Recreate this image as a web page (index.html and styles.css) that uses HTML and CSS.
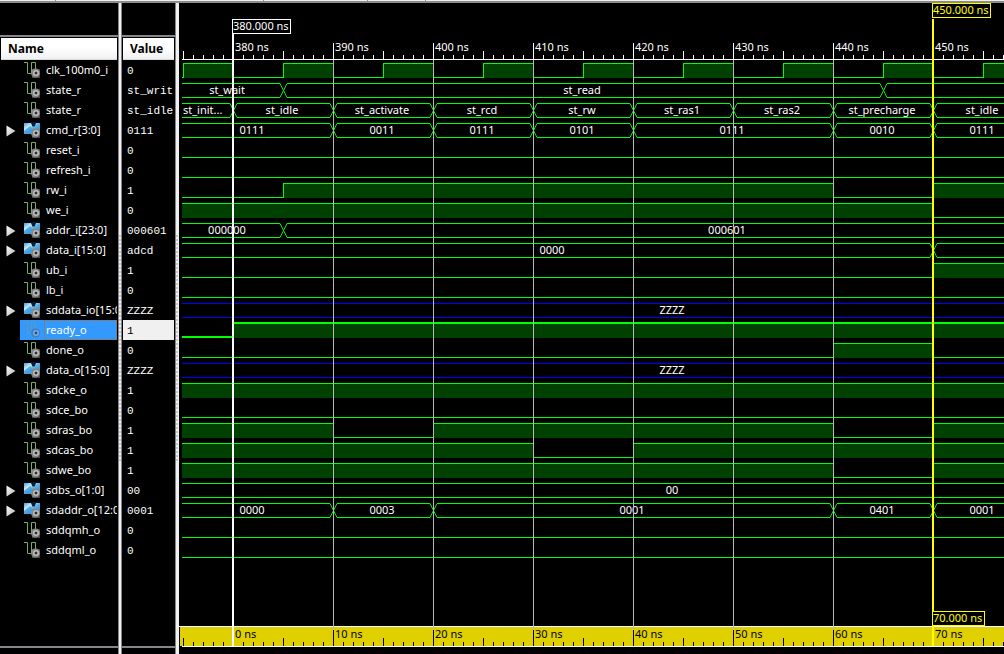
FILE: index.html
```html
<!DOCTYPE html>
<html lang="en">
<head>
<meta charset="utf-8">
<title>Waveform viewer</title>
<link rel="stylesheet" href="styles.css">
</head>
<body>
<svg class="defs" width="0" height="0" aria-hidden="true">
  <defs>
    <linearGradient id="sky" x1="0" y1="0" x2="1" y2="1"><stop offset="0" stop-color="#3a9ade"/><stop offset="0.3" stop-color="#cdeafc"/><stop offset="0.5" stop-color="#5ab2ea"/><stop offset="1" stop-color="#2078c4"/></linearGradient>
    <linearGradient id="tri" x1="0" y1="0" x2="1" y2="1"><stop offset="0" stop-color="#ffffff"/><stop offset="1" stop-color="#b0b0b0"/></linearGradient>
    <symbol id="gear" viewBox="0 0 16 16">
      <rect x="8" y="7" width="8" height="9" fill="#8c8c8c" opacity=".5"/>
      <circle cx="11.5" cy="11" r="4.500" fill="#8a8a8a"/>
      <circle cx="12" cy="11" r="3.500" fill="#c4c4c4" stroke="#606060" stroke-width=".6"/>
      <path d="M10.500 11h3M12 9.500v3" stroke="#000" stroke-width="1"/>
    </symbol>
    <symbol id="wire" viewBox="0 0 16 16">
      <path d="M0 .5H3.500V11.500H7.500V.5H11.500V8" fill="none" stroke="#7cac68"/>
      <use href="#gear"/>
    </symbol>
    <symbol id="wire-sel" viewBox="0 0 16 16">
      <path d="M0 .5H3.500V11.500H7.500V.5H11.500V8" fill="none" stroke="#5c9cae"/>
      <rect x="8" y="7" width="8" height="9" fill="#5a96cc" opacity=".5"/>
      <circle cx="11.500" cy="11" r="4.500" fill="#3c80c4"/>
      <circle cx="12" cy="11" r="3.500" fill="#78b0e8" stroke="#2c68a8" stroke-width=".6"/>
      <path d="M10.500 11h3M12 9.500v3" stroke="#0c2c58"/>
    </symbol>
    <symbol id="bus" viewBox="0 0 16 16">
      <path d="M0 1H16V12H0Z" fill="url(#sky)"/>
      <path d="M6.500 0H12.500L10.500 4.500H8.500Z" fill="#081c30"/>
      <path d="M0 9L6 4L9 8V12H0Z" fill="#3a9ce0" opacity=".7"/>
      <use href="#gear"/>
    </symbol>
    <symbol id="arrow" viewBox="0 0 10 12"><path d="M.5 .5L9.500 6L.5 11.500Z" fill="url(#tri)"/></symbol>
  </defs>
</svg>
<div class="strip"><span class="tab tab-a"></span><span class="tab tab-b"></span><span class="tab tab-c"></span><span class="tab tab-d"></span></div>
<main class="viewer">
  <section class="panel names">
    <div class="spacer"></div>
    <h2 class="head">Name</h2>
    <ul class="list">
      <li class="row"><svg class="icon"><use href="#wire"/></svg><span class="label">clk_100m0_i</span></li>
      <li class="row"><svg class="icon"><use href="#wire"/></svg><span class="label">state_r</span></li>
      <li class="row"><svg class="icon"><use href="#wire"/></svg><span class="label">state_r</span></li>
      <li class="row"><button class="expand" aria-label="Expand cmd_r"><svg class="arrow"><use href="#arrow"/></svg></button><svg class="icon"><use href="#bus"/></svg><span class="label">cmd_r[3:0]</span></li>
      <li class="row"><svg class="icon"><use href="#wire"/></svg><span class="label">reset_i</span></li>
      <li class="row"><svg class="icon"><use href="#wire"/></svg><span class="label">refresh_i</span></li>
      <li class="row"><svg class="icon"><use href="#wire"/></svg><span class="label">rw_i</span></li>
      <li class="row"><svg class="icon"><use href="#wire"/></svg><span class="label">we_i</span></li>
      <li class="row"><button class="expand" aria-label="Expand addr_i"><svg class="arrow"><use href="#arrow"/></svg></button><svg class="icon"><use href="#bus"/></svg><span class="label">addr_i[23:0]</span></li>
      <li class="row"><button class="expand" aria-label="Expand data_i"><svg class="arrow"><use href="#arrow"/></svg></button><svg class="icon"><use href="#bus"/></svg><span class="label">data_i[15:0]</span></li>
      <li class="row"><svg class="icon"><use href="#wire"/></svg><span class="label">ub_i</span></li>
      <li class="row"><svg class="icon"><use href="#wire"/></svg><span class="label">lb_i</span></li>
      <li class="row"><button class="expand" aria-label="Expand sddata_io"><svg class="arrow"><use href="#arrow"/></svg></button><svg class="icon"><use href="#bus"/></svg><span class="label">sddata_io[15:0]</span></li>
      <li class="row selected"><svg class="icon"><use href="#wire-sel"/></svg><span class="label">ready_o</span></li>
      <li class="row"><svg class="icon"><use href="#wire"/></svg><span class="label">done_o</span></li>
      <li class="row"><button class="expand" aria-label="Expand data_o"><svg class="arrow"><use href="#arrow"/></svg></button><svg class="icon"><use href="#bus"/></svg><span class="label">data_o[15:0]</span></li>
      <li class="row"><svg class="icon"><use href="#wire"/></svg><span class="label">sdcke_o</span></li>
      <li class="row"><svg class="icon"><use href="#wire"/></svg><span class="label">sdce_bo</span></li>
      <li class="row"><svg class="icon"><use href="#wire"/></svg><span class="label">sdras_bo</span></li>
      <li class="row"><svg class="icon"><use href="#wire"/></svg><span class="label">sdcas_bo</span></li>
      <li class="row"><svg class="icon"><use href="#wire"/></svg><span class="label">sdwe_bo</span></li>
      <li class="row"><button class="expand" aria-label="Expand sdbs_o"><svg class="arrow"><use href="#arrow"/></svg></button><svg class="icon"><use href="#bus"/></svg><span class="label">sdbs_o[1:0]</span></li>
      <li class="row"><button class="expand" aria-label="Expand sdaddr_o"><svg class="arrow"><use href="#arrow"/></svg></button><svg class="icon"><use href="#bus"/></svg><span class="label">sdaddr_o[12:0]</span></li>
      <li class="row"><svg class="icon"><use href="#wire"/></svg><span class="label">sddqmh_o</span></li>
      <li class="row"><svg class="icon"><use href="#wire"/></svg><span class="label">sddqml_o</span></li>
    </ul>
    <div class="foot"></div>
  </section>
  <div class="split"></div>
  <section class="panel values">
    <div class="spacer"></div>
    <h2 class="head">Value</h2>
    <ul class="list">
      <li class="val">0</li>
      <li class="val">st_writ</li>
      <li class="val">st_idle</li>
      <li class="val">0111</li>
      <li class="val">0</li>
      <li class="val">0</li>
      <li class="val">1</li>
      <li class="val">0</li>
      <li class="val">000601</li>
      <li class="val">adcd</li>
      <li class="val">1</li>
      <li class="val">0</li>
      <li class="val">ZZZZ</li>
      <li class="val current">1</li>
      <li class="val">0</li>
      <li class="val">ZZZZ</li>
      <li class="val">1</li>
      <li class="val">0</li>
      <li class="val">1</li>
      <li class="val">1</li>
      <li class="val">1</li>
      <li class="val">00</li>
      <li class="val">0001</li>
      <li class="val">0</li>
      <li class="val">0</li>
    </ul>
    <div class="foot"></div>
  </section>
  <div class="split split-last"></div>
  <section class="waves"><svg id="plot" class="plot"></svg></section>
</main>
<script src="waves.js"></script>
</body>
</html>
```
FILE: styles.css
```css
* { box-sizing: border-box; }
body {
  margin: 0;
  height: 100vh;
  display: flex;
  flex-direction: column;
  overflow: hidden;
  background: #000;
  color: #fff;
  font: 11px/20px "Noto Sans", "Open Sans", sans-serif;
}
.defs { position: absolute; }
.strip {
  display: flex;
  height: 3px;
  flex: none;
  background: #f0f0f0;
  border-bottom: 2px solid #8c8c8c;
}
.tab { border-right: 1px solid #909090; }
.tab-a { width: 56px; }
.tab-b { width: 208px; }
.tab-c { width: 104px; }
.tab-d { width: 58px; }
.viewer { flex: 1; display: flex; min-height: 0; }
.panel {
  display: flex;
  flex-direction: column;
  flex: none;
  overflow: hidden;
}
.names { width: 118px; }
.values { width: 53px; }
.spacer { height: 34px; flex: none; border-bottom: 2px solid #84868c; }
.head {
  margin: 1px 1px 0;
  padding: 0 7px;
  height: 22px;
  flex: none;
  font-size: 12px;
  font-weight: 700;
  line-height: 22px;
  color: #000;
  background: linear-gradient(#fff 45%, #f0f1f3);
  border-bottom: 1px solid #d8d8d8;
}
.list { list-style: none; margin: 0; padding: 0; flex: 1; }
.row {
  display: grid;
  grid-template-columns: 20px 23px 1fr;
  height: 20px;
  margin-right: 1px;
  padding-left: 1px;
  overflow: hidden;
}
.icon { grid-column: 2; grid-row: 1; width: 16px; height: 16px; margin: 2px 0 0 3px; }
.label {
  grid-column: 3;
  padding-left: 2px;
  overflow: hidden;
  white-space: nowrap;
}
.expand {
  grid-column: 1;
  grid-row: 1;
  width: 10px;
  height: 12px;
  margin: 5px 0 0 5px;
  padding: 0;
  border: 0;
  background: none;
}
.arrow { display: block; width: 10px; height: 12px; }
.selected { background: linear-gradient(90deg, #000 20px, #3399ff 20px); }
.selected .label {
  outline: 1px dotted #b06a30;
  outline-offset: -1px;
}
.val {
  height: 20px;
  margin: 0 1px;
  padding-left: 4px;
  overflow: hidden;
  white-space: nowrap;
  font-family: "Liberation Mono", monospace;
  font-size: 11px;
  line-height: 22px;
}
.current { background: #f0f0f0; color: #000; }
.foot { height: 8px; flex: none; border-top: 2px solid #84868c; }
.split {
  width: 4px;
  flex: none;
  border-left: 1px solid #84868c;
  border-right: 1px solid #84868c;
  background:
    repeating-linear-gradient(#c8c8c8 0 2px, transparent 2px 4px) 0 232px / 2px 228px no-repeat,
    #f0f0f0;
}
.split-last { border-right-color: #f0f0f0; }
.waves { flex: 1; min-width: 0; }
.plot { display: block; width: 100%; height: 100%; overflow: hidden; shape-rendering: crispEdges; }
.plot text { fill: #fff; }
.plot .dark { fill: #000; }
.plot .yellow { fill: #ff0; }
.mid { text-anchor: middle; }
.line { fill: none; stroke: #0f0; }
.line-z { fill: none; stroke: #00f; }
.thick { stroke-width: 2px; }
.cross { fill: none; stroke: #0e0; shape-rendering: auto; }
.high { fill: #004000; }
.tick { stroke: #fff; }
.tick-dark { stroke: #000; }
.grid { stroke: #b8b8b8; }
.band { fill: #e0d000; }
.cursor { stroke: #fff; stroke-width: 2px; }
.cursor-b { stroke: #ff0; stroke-width: 2px; }
.tag { fill: #000; stroke: #fff; }
.tag-b { fill: #000; stroke: #ff0; }
```
FILE: waves.js
```js
// Times are in nanoseconds; one nanosecond spans ten pixels.
const FIRST = 375, SCALE = 10, LEFT = 4, EDGE = 3;
const FROM = 374, UNTIL = 474;
const ROW_TOP = 57, ROW = 20;
const plot = document.getElementById('plot');

// wire: [start, level] pairs; bus: [start, text] pairs
const clock = [];
for (let t = 375; t < 480; t += 10) clock.push([t, 1], [t + 5, 0]);
const signals = [
  { wire: [[FROM, 0], ...clock] },
  { bus: [[FROM, 'st_wait'], [385, 'st_read'], [445, '']] },
  { bus: [[FROM, 'st_init...'], [380, 'st_idle'], [390, 'st_activate'], [400, 'st_rcd'], [410, 'st_rw'], [420, 'st_ras1'], [430, 'st_ras2'], [440, 'st_precharge'], [450, 'st_idle'], [460, '']] },
  { bus: [[FROM, '0111'], [390, '0011'], [400, '0111'], [410, '0101'], [420, '0111'], [440, '0010'], [450, '0111'], [460, '']] },
  { wire: [[FROM, 0]] },
  { wire: [[FROM, 0]] },
  { wire: [[FROM, 0], [385, 1], [440, 0], [450, 1]] },
  { wire: [[FROM, 1], [450, 0]] },
  { bus: [[FROM, '000000'], [385, '000601']] },
  { bus: [[FROM, '0000'], [450, '']] },
  { wire: [[FROM, 0], [450, 1]] },
  { wire: [[FROM, 0]] },
  { bus: [[FROM, 'ZZZZ']], z: true },
  { wire: [[FROM, 0], [380, 1]], thick: true },
  { wire: [[FROM, 0], [440, 1], [450, 0]] },
  { bus: [[FROM, 'ZZZZ']], z: true },
  { wire: [[FROM, 1]] },
  { wire: [[FROM, 0]] },
  { wire: [[FROM, 1], [390, 0], [400, 1], [440, 0], [450, 1]] },
  { wire: [[FROM, 1], [410, 0], [420, 1]] },
  { wire: [[FROM, 1], [440, 0], [450, 1]] },
  { bus: [[FROM, '00']] },
  { bus: [[FROM, '0000'], [390, '0003'], [400, '0001'], [440, '0401'], [450, '0001'], [460, '']] },
  { wire: [[FROM, 0]] },
  { wire: [[FROM, 0]] }
];

const x = t => LEFT + (t - FIRST) * SCALE;
let parts = [];

function add(tag, cls, attrs, text) {
  const list = Object.entries(attrs).map(([k, v]) => `${k}="${v}"`).join(' ');
  parts.push(`<${tag} class="${cls}" ${list}>${text || ''}</${tag}>`);
}
const path = (cls, d) => add('path', cls, { d });
const vline = (cls, px, top, bottom) => path(cls, `M${px} ${top}V${bottom}`);

function drawWire(signal, top) {
  const thick = signal.thick ? ' thick' : '';
  const shift = signal.thick ? 0 : 0.5;
  const hi = top + 3 + shift, lo = top + 17 + shift;
  let d = '';
  signal.wire.forEach(([start, level], i) => {
    const end = signal.wire[i + 1] ? signal.wire[i + 1][0] : UNTIL;
    const a = Math.max(x(start), EDGE), b = x(end);
    const y = level ? hi : lo;
    if (level) add('rect', 'high', { x: a, y: top + 3, width: b - a, height: 15 });
    d += `${i ? 'L' : 'M'}${a + shift * (i > 0)} ${y}H${b + shift}`;
  });
  path('line' + thick, d);
}

function drawBus(signal, top) {
  const hi = top + 3.5, lo = top + 17.5;
  signal.bus.forEach(([start, text], i) => {
    const last = i === signal.bus.length - 1;
    const end = last ? UNTIL : signal.bus[i + 1][0];
    const a = i ? x(start) + 4 : EDGE, b = last ? x(end) : x(end) - 3;
    path(signal.z ? 'line-z' : 'line', `M${a} ${hi}H${b}M${a} ${lo}H${b}`);
    if (i) {
      const c = x(start) + 0.5;
      path('cross', `M${c - 3.5} ${hi}L${c + 3.5} ${lo}M${c + 3.5} ${hi}L${c - 3.5} ${lo}`);
    }
    if (text.endsWith('...')) add('text', '', { x: LEFT, y: top + 14 }, text);
    else if (text) add('text', 'mid', { x: (x(start) + x(end)) / 2 - 1, y: top + 14 }, text);
  });
}

function draw() {
  parts = [];
  const width = plot.clientWidth, height = plot.clientHeight;
  const band = height - 28, base = height - 8;
  signals.forEach((s, i) => (s.wire ? drawWire : drawBus)(s, ROW_TOP + i * ROW));

  add('rect', 'band', { x: 1, y: band + 1, width, height: 19 });
  path('tick', `M0 ${band + 0.5}H${width}M${EDGE} ${base + 0.5}H${width}M${EDGE} 56.5H${width}`);
  for (let t = FIRST; x(t) < width; t++) {
    const px = x(t) + 0.5, major = t % 10 === 0, size = major ? 16 : t % 5 === 0 ? 8 : 4;
    vline('tick', px, 56 - size, 56);
    vline('tick-dark', px, base - size, base);
    if (major) {
      vline('grid', px, 57, band + 4);
      add('text', '', { x: px + 1.5, y: 48 }, `${t} ns`);
      add('text', 'dark', { x: px + 1.5, y: band + 12 }, `${t - 380} ns`);
    }
  }
  const a = x(380), b = x(450);
  vline('cursor', a, 31, base + 1);
  vline('cursor-b', b, 16, base);
  add('rect', 'tag', { x: a - 0.5, y: 16.5, width: 58, height: 14 });
  add('text', '', { x: a, y: 27 }, '380.000 ns');
  add('rect', 'tag-b', { x: b - 0.5, y: 0.5, width: 58, height: 14 });
  add('text', 'yellow', { x: b, y: 11 }, '450.000 ns');
  add('rect', 'tag-b', { x: b - 0.5, y: band - 14.5, width: 52, height: 14 });
  add('text', 'yellow', { x: b, y: band - 4 }, '70.000 ns');
  plot.innerHTML = parts.join('');
}

draw();
addEventListener('resize', draw);
```
